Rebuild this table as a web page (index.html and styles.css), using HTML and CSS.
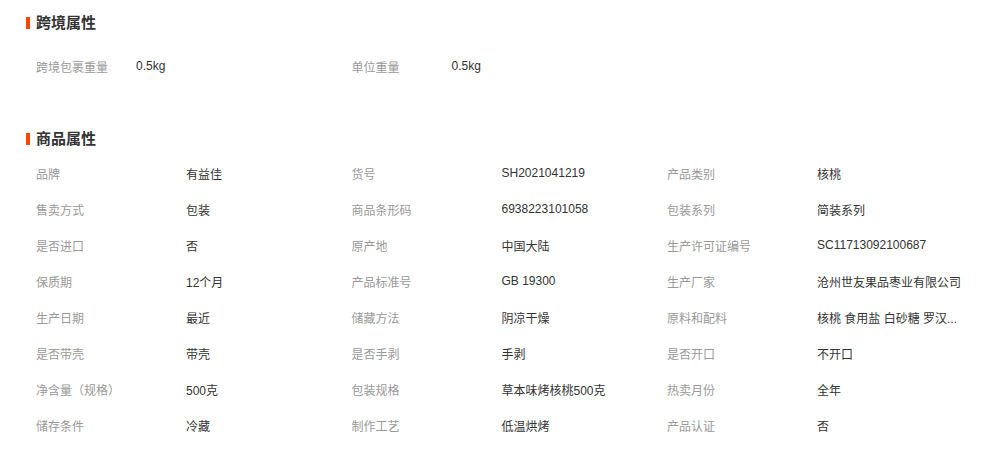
FILE: index.html
```html
<!DOCTYPE html>
<html lang="zh-CN">
<head>
<meta charset="UTF-8">
<title>商品属性</title>
<link rel="stylesheet" href="styles.css">
</head>
<body>

<div class="attr-block cross">
  <h3 class="attr-title">跨境属性</h3>
  <ul class="attr-list">
    <li><span class="name">跨境包裹重量</span><span class="value">0.5kg</span></li>
    <li><span class="name">单位重量</span><span class="value">0.5kg</span></li>
  </ul>
</div>

<div class="attr-block goods">
  <h3 class="attr-title">商品属性</h3>
  <ul class="attr-list">
    <li><span class="name">品牌</span><span class="value">有益佳</span></li>
    <li><span class="name">货号</span><span class="value">SH2021041219</span></li>
    <li><span class="name">产品类别</span><span class="value">核桃</span></li>

    <li><span class="name">售卖方式</span><span class="value">包装</span></li>
    <li><span class="name">商品条形码</span><span class="value">6938223101058</span></li>
    <li><span class="name">包装系列</span><span class="value">简装系列</span></li>

    <li><span class="name">是否进口</span><span class="value">否</span></li>
    <li><span class="name">原产地</span><span class="value">中国大陆</span></li>
    <li><span class="name">生产许可证编号</span><span class="value">SC11713092100687</span></li>

    <li><span class="name">保质期</span><span class="value">12个月</span></li>
    <li><span class="name">产品标准号</span><span class="value">GB 19300</span></li>
    <li><span class="name">生产厂家</span><span class="value">沧州世友果品枣业有限公司</span></li>

    <li><span class="name">生产日期</span><span class="value">最近</span></li>
    <li><span class="name">储藏方法</span><span class="value">阴凉干燥</span></li>
    <li><span class="name">原料和配料</span><span class="value" title="核桃 食用盐 白砂糖 罗汉果">核桃 食用盐 白砂糖 罗汉...</span></li>

    <li><span class="name">是否带壳</span><span class="value">带壳</span></li>
    <li><span class="name">是否手剥</span><span class="value">手剥</span></li>
    <li><span class="name">是否开口</span><span class="value">不开口</span></li>

    <li><span class="name">净含量（规格）</span><span class="value">500克</span></li>
    <li><span class="name">包装规格</span><span class="value">草本味烤核桃500克</span></li>
    <li><span class="name">热卖月份</span><span class="value">全年</span></li>

    <li><span class="name">储存条件</span><span class="value">冷藏</span></li>
    <li><span class="name">制作工艺</span><span class="value">低温烘烤</span></li>
    <li><span class="name">产品认证</span><span class="value">否</span></li>
  </ul>
</div>

</body>
</html>
```

FILE: styles.css
```css
body {
	margin: 0;
	padding: 13px 0 0 0;
	background: #fff;
	font-family: "Liberation Sans", "Noto Sans CJK SC", sans-serif;
	font-size: 12px;
	color: #333;
}

/* block titles with the orange mark */
.attr-title {
	margin: 0 0 0 26px;
	padding-left: 10px;
	height: 20px;
	line-height: 20px;
	font-size: 15px;
	font-weight: bold;
	color: #333;
	position: relative;
}

.attr-title:before {
	content: "";
	position: absolute;
	left: 0;
	top: 4px;
	width: 4px;
	height: 12px;
	background: #ff4400;
}

.attr-list {
	list-style: none;
	margin: 0;
	padding: 0 0 0 36px;
	display: grid;
	grid-template-columns: repeat(3, 315.5px);
	grid-auto-rows: 36px;
}

.attr-list li {
	display: flex;
	align-items: center;
	white-space: nowrap;
}

.attr-list .name {
	flex: none;
	width: 150px;
	color: #999;
}

.attr-list .value {
	color: #333;
}

/* cross-border block */
.cross .attr-list {
	margin-top: 15px;
}

.cross .name {
	width: 100px;
}

.goods {
	margin-top: 45px;
}

.goods .attr-list {
	margin-top: 6px;
}
```
